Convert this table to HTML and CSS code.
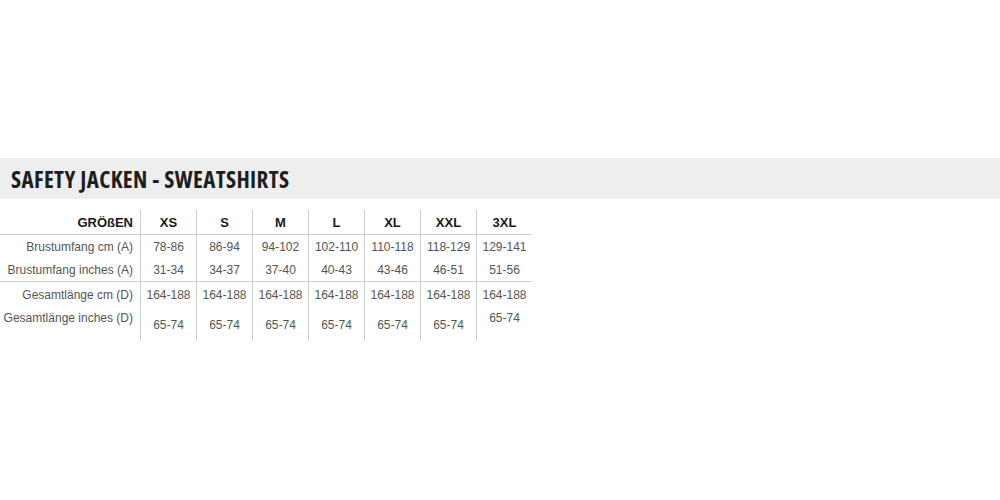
FILE: index.html
```html
<!DOCTYPE html>
<html lang="de">
<head>
<meta charset="utf-8">
<link rel="stylesheet" href="styles.css">
</head>
<body>
<div class="page">
  <div class="band"><h1 class="title">SAFETY JACKEN - SWEATSHIRTS</h1></div>
  <table class="sizes">
    <thead>
      <tr class="head"><th class="label">GRÖßEN</th><th>XS</th><th>S</th><th>M</th><th>L</th><th>XL</th><th>XXL</th><th>3XL</th></tr>
    </thead>
    <tbody>
      <tr class="r1"><td class="label">Brustumfang cm (A)</td><td>78-86</td><td>86-94</td><td>94-102</td><td>102-110</td><td>110-118</td><td>118-129</td><td>129-141</td></tr>
      <tr class="r2"><td class="label">Brustumfang inches (A)</td><td>31-34</td><td>34-37</td><td>37-40</td><td>40-43</td><td>43-46</td><td>46-51</td><td>51-56</td></tr>
      <tr class="r3"><td class="label">Gesamtlänge cm (D)</td><td>164-188</td><td>164-188</td><td>164-188</td><td>164-188</td><td>164-188</td><td>164-188</td><td>164-188</td></tr>
      <tr class="r4"><td class="label top">Gesamtlänge inches (D)</td><td>65-74</td><td>65-74</td><td>65-74</td><td>65-74</td><td>65-74</td><td>65-74</td><td class="top">65-74</td></tr>
    </tbody>
  </table>
</div>
</body>
</html>
```
FILE: styles.css
```css
html, body { margin: 0; padding: 0; background: #fff; }
.page { width: 1000px; height: 500px; padding-top: 158px; box-sizing: border-box; }
.band { background: #eeeeee; height: 41px; display: flex; align-items: center; padding-left: 11px; }
.title {
  margin: 0;
  font-family: "Open Sans", sans-serif;
  font-stretch: 75%;
  font-weight: 700;
  font-size: 23px;
  color: #1e1e1e;
  letter-spacing: 0.4px;
}
.sizes {
  margin-top: 11px;
  border-collapse: collapse;
  font-family: "Liberation Sans", Arial, sans-serif;
  font-size: 12px;
  color: #555;
}
.sizes th, .sizes td {
  width: 55px;
  padding: 2px 0 0;
  text-align: center;
  vertical-align: middle;
  border-left: 1px solid #cfcfcf;
}
.sizes td { padding-top: 3px; }
.sizes .label { width: 133px; padding-right: 7px; text-align: right; border-left: none; }
.sizes th { color: #1a1a1a; font-weight: bold; font-size: 13px; }
.head { height: 24px; border-bottom: 1px solid #cfcfcf; }
.r1 { height: 23px; }
.r2 { height: 24px; border-bottom: 1px solid #cfcfcf; }
.r3 { height: 25px; }
.r4 { height: 35px; }
.sizes td.top { vertical-align: top; padding-top: 5px; }
```
